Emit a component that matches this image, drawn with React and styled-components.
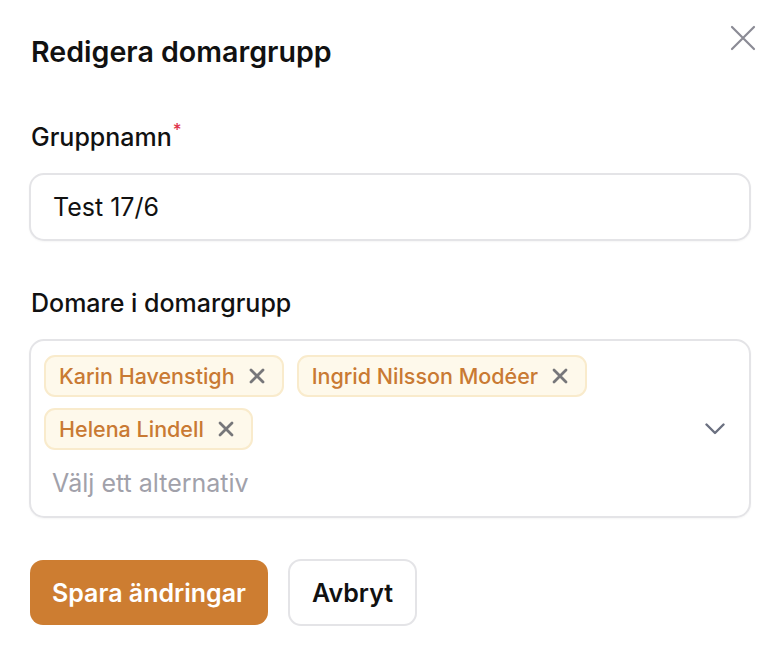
import React, { Component } from 'react';
import styled, { createGlobalStyle } from 'styled-components';

const GlobalStyle = createGlobalStyle`
  body {
    margin: 0;
    background: #ffffff;
    font-family: Inter, 'Noto Sans', sans-serif;
    color: #111111;
  }
`;

class App extends Component {
  constructor() {
    super();
    this.state = {
      groupName: 'Test 17/6',
      judges: ['Karin Havenstigh', 'Ingrid Nilsson Modéer', 'Helena Lindell'],
    };
  }

  handleInputChange = (event) => {
    this.setState({ groupName: event.target.value });
  };

  removeJudge = (name) => {
    this.setState({ judges: this.state.judges.filter((j) => j !== name) });
  };

  render() {
    return (
      <Dialog>
        <GlobalStyle />
        <Header>
          <h2>Redigera domargrupp</h2>
          <CloseButton aria-label='Stäng'>
            <svg width='26' height='26' viewBox='0 0 26 26'>
              <path d='M2 2 L24 24 M24 2 L2 24' stroke='#8b8b95' strokeWidth='2.2' strokeLinecap='round' />
            </svg>
          </CloseButton>
        </Header>

        <Field>
          <Label>
            Gruppnamn<sup>*</sup>
          </Label>
          <TextInput value={this.state.groupName} onChange={this.handleInputChange} />
        </Field>

        <Field>
          <Label>Domare i domargrupp</Label>
          <MultiSelect>
            <Chips>
              {this.state.judges.map((name) => (
                <Chip key={name}>
                  {name}
                  <ChipRemove onClick={() => this.removeJudge(name)}>
                    <svg width='16' height='16' viewBox='0 0 16 16'>
                      <path d='M2 2 L14 14 M14 2 L2 14' stroke='#77777a' strokeWidth='2.8' strokeLinecap='round' />
                    </svg>
                  </ChipRemove>
                </Chip>
              ))}
            </Chips>
            <Placeholder>Välj ett alternativ</Placeholder>
            <Chevron>
              <svg width='20' height='12' viewBox='0 0 20 12'>
                <path d='M1.5 1.5 L10 10 L18.5 1.5' fill='none' stroke='#6b7080' strokeWidth='2.4' strokeLinecap='round' strokeLinejoin='round' />
              </svg>
            </Chevron>
          </MultiSelect>
        </Field>

        <Actions>
          <Button primary>Spara ändringar</Button>
          <Button>Avbryt</Button>
        </Actions>
      </Dialog>
    );
  }
}

const Dialog = styled.div`
  width: 778px;
  height: 646px;
  box-sizing: border-box;
  padding: 25px 27px 0 29px;
  background: #ffffff;
`;

const Header = styled.div`
  display: flex;
  justify-content: space-between;
  align-items: flex-start;
  margin-bottom: 52px;

  h2 {
    margin: 11px 0 0 2px;
    font-size: 28.6px;
    font-weight: 600;
    line-height: 32px;
    color: #111111;
  }
`;

const CloseButton = styled.button`
  border: none;
  background: none;
  padding: 0;
  margin: -2px -7px 0 0;
  width: 30px;
  height: 30px;
  display: flex;
  align-items: center;
  justify-content: center;
  cursor: pointer;
`;

const Field = styled.div`
  display: flex;
  flex-direction: column;
  margin-bottom: 45px;
`;

const Label = styled.label`
  font-size: 25px;
  font-weight: 500;
  line-height: 34px;
  margin: 0 0 19px 2px;
  color: #111111;

  sup {
    color: #e0334b;
    font-size: 17px;
    margin-left: 1px;
    vertical-align: 10px;
    line-height: 0;
  }
`;

const TextInput = styled.input`
  box-sizing: border-box;
  width: 100%;
  height: 68px;
  border: 2px solid #e4e4e7;
  border-radius: 15px;
  padding: 0 22px;
  font-family: Inter, sans-serif;
  font-size: 25px;
  color: #111111;
  outline: none;
  box-shadow: 0 1px 2px rgba(0, 0, 0, 0.04);
`;

const MultiSelect = styled.div`
  position: relative;
  box-sizing: border-box;
  width: 100%;
  border: 2px solid #e4e4e7;
  border-radius: 15px;
  padding: 14px 60px 14px 13px;
  box-shadow: 0 1px 2px rgba(0, 0, 0, 0.04);
`;

const Chips = styled.div`
  display: flex;
  flex-wrap: wrap;
  gap: 11px 13px;
`;

const Chip = styled.span`
  display: inline-flex;
  align-items: center;
  gap: 14px;
  height: 42px;
  box-sizing: border-box;
  padding: 0 17px 0 13px;
  background: #fef9eb;
  border: 2px solid #f9ebcc;
  border-radius: 11px;
  color: #c97a33;
  font-size: 21.5px;
  font-weight: 500;
`;

const ChipRemove = styled.span`
  display: flex;
  align-items: center;
  cursor: pointer;
`;

const Placeholder = styled.div`
  margin: 18px 0 4px 8px;
  font-size: 25px;
  line-height: 30px;
  color: #a1a1aa;
`;

const Chevron = styled.span`
  position: absolute;
  right: 24px;
  top: 50%;
  transform: translateY(-50%);
  display: flex;
`;

const Actions = styled.div`
  display: flex;
  gap: 20px;
  align-items: center;
  margin: -4px 0 0 1px;
`;

const Button = styled.button`
  box-sizing: border-box;
  height: ${(p) => (p.primary ? '65px' : '67px')};
  padding: 0 22px;
  border-radius: 13px;
  border: ${(p) => (p.primary ? 'none' : '2px solid #e4e4e7')};
  background: ${(p) => (p.primary ? '#cd7d31' : '#ffffff')};
  color: ${(p) => (p.primary ? '#ffffff' : '#111111')};
  font-family: Inter, sans-serif;
  font-size: 25px;
  font-weight: 600;
  cursor: pointer;
`;

export default App;
